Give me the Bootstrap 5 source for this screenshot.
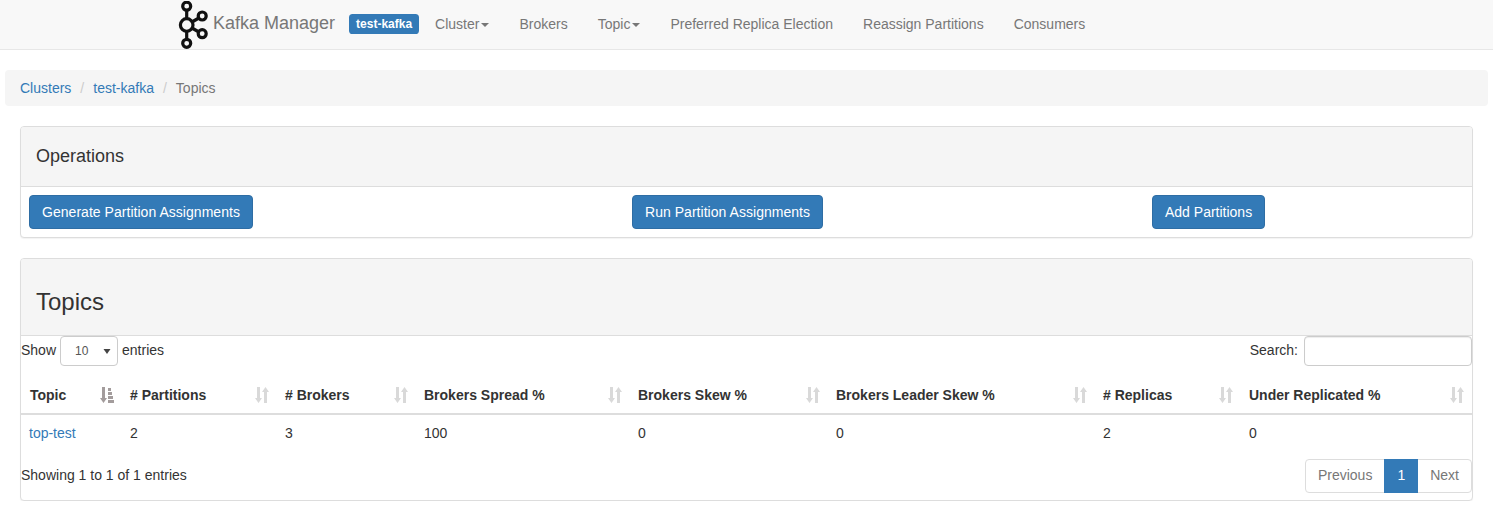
<!DOCTYPE html>
<html lang="en">
<head>
<meta charset="utf-8">
<title>Topics</title>
<link href="https://cdn.jsdelivr.net/npm/bootstrap@5.3.0/dist/css/bootstrap.min.css" rel="stylesheet">
<style>
body{font-family:"Liberation Sans",Arial,sans-serif;font-size:14px;line-height:20px;color:#333;background:#fff}
a{color:#337ab7;text-decoration:none}
.km-nav{height:50px;background:#f8f8f8;border-bottom:1px solid #e7e7e7;padding-left:178px;padding-bottom:2px}
.km-logo{width:30px;height:48px;display:block;margin-top:2px}
.km-brand{font-size:18px;color:#777;margin-left:5px;margin-right:14px;position:relative;top:-1px;white-space:nowrap}
.km-tag{background:#337ab7;color:#fff;font-weight:700;font-size:12px;line-height:12px;padding:4px 7px;border-radius:3.6px;height:20px;white-space:nowrap}
.km-link{color:#777;padding:0 15px;white-space:nowrap}
.km-link.km-first{padding-left:16px}
.km-caret{display:inline-block;border-top:4px solid #777;border-left:4px solid transparent;border-right:4px solid transparent;margin-left:2px;vertical-align:middle}
.km-crumb{margin:20px 5px 0;height:36px;background:#f5f5f5;border-radius:4px;padding:8px 15px;display:flex}
.km-crumb .breadcrumb{margin:0;--bs-breadcrumb-divider-color:#ccc;--bs-breadcrumb-item-active-color:#777;--bs-breadcrumb-item-padding-x:9px}
.km-crumb .breadcrumb-item+.breadcrumb-item::before{content:"/";color:#ccc}
.km-panel{margin:20px 20px 0;border:1px solid #ddd;border-radius:4px;box-shadow:0 1px 1px rgba(0,0,0,.05);background:#fff}
.km-head{background:#f5f5f5;border-bottom:1px solid #ddd;border-radius:3px 3px 0 0;padding:0 15px}
.km-head h3{font-size:18px;line-height:20px;font-weight:500;color:#333;margin:0;padding:19px 0 20px}
.km-head h2{font-size:24px;line-height:26px;font-weight:500;color:#333;margin:0;padding:30px 0 20px}
.km-ops{display:grid;grid-template-columns:603px 520px auto;padding:8px}
.km-ops>div{justify-self:start}
.km-btn{background:#337ab7;border:1px solid #2e6da4;color:#fff;font-size:14px;line-height:20px;padding:6px 12px;border-radius:4px}
.km-btn-long{letter-spacing:.035px}
.km-ctrl{height:30px}
.km-ctrl label{line-height:28px}
.km-select{width:58px;height:30px;border:1px solid #ccc;border-radius:4px;font-size:12px;line-height:18px;color:#555;padding:0 0 0 14px;margin:0 4px;appearance:none;background:#fff url("data:image/svg+xml,%3Csvg xmlns='http://www.w3.org/2000/svg' width='8' height='6'%3E%3Cpath d='M.5 1h7L4 6z' fill='%23444'/%3E%3C/svg%3E") no-repeat right 6px center}
.km-input{width:168px;height:30px;border:1px solid #ccc;border-radius:4px;margin-left:6px;box-shadow:inset 0 1px 1px rgba(0,0,0,.075)}
.km-table{width:1451px;table-layout:fixed;margin:11px 0 0;border-collapse:collapse}
.km-table th{font-weight:700;height:37px;padding:0 8px 1px;border-bottom:2px solid #ddd;vertical-align:middle;white-space:nowrap}
.km-table th:first-child{padding-left:9px}
.km-table td{height:36px;padding:0 8px;vertical-align:middle}
.km-th{display:flex;justify-content:space-between;align-items:center}
.km-sort{width:14px;height:16px;display:block}
.w1{width:101px}.w2{width:155px}.w3{width:139px}.w4{width:214px}.w5{width:198px}.w6{width:267px}.w7{width:146px}.w8{width:231px}
.km-foot{padding:9px 0 7px;align-items:flex-start}
.km-info{padding-top:6px}
.km-pager{margin:0;--bs-pagination-border-color:#ddd}
.km-pager .page-link{font-size:14px;line-height:20px;padding:5px 12px 7px;color:#777;border-color:#ddd;background:#fff}
.km-pager .page-item:first-child .page-link{border-radius:4px 0 0 4px}
.km-pager .page-item:last-child .page-link{border-radius:0 4px 4px 0}
.km-pager .page-item.active .page-link{background:#337ab7;border-color:#337ab7;color:#fff;font-weight:400}
</style>
</head>
<body>
<svg width="0" height="0" class="position-absolute">
  <defs>
    <path id="km-both" d="M2 0h3v11h2L3.500 16 0 11h2z M9 16V5H7L10.500 0 14 5h-2v11z"/>
    <path id="km-bars" d="M2 0h3v11h2L3.500 16 0 11h2z M8 1h3v3H8z M8 5h4v3H8z M8 9h5v3H8z M8 13h6v3H8z"/>
  </defs>
</svg>
<nav class="km-nav d-flex align-items-center">
  <svg class="km-logo" viewBox="0 0 30 48" aria-label="Kafka logo">
    <g fill="none" stroke="#111" stroke-width="3.200">
      <path d="M8.700 9V18M8.700 30V38M14 21L20 17.500M14 27L20 30.500"/>
      <circle cx="8.700" cy="5.200" r="4"/>
      <circle cx="8.700" cy="24" r="6.300"/>
      <circle cx="8.700" cy="42.300" r="4"/>
      <circle cx="24.200" cy="15" r="4"/>
      <circle cx="24.200" cy="32.700" r="4"/>
    </g>
  </svg>
  <span class="km-brand">Kafka Manager</span>
  <span class="km-tag">test-kafka</span>
  <a class="km-link km-first" href="#">Cluster<span class="km-caret"></span></a>
  <a class="km-link" href="#">Brokers</a>
  <a class="km-link" href="#">Topic<span class="km-caret"></span></a>
  <a class="km-link" href="#">Preferred Replica Election</a>
  <a class="km-link" href="#">Reassign Partitions</a>
  <a class="km-link" href="#">Consumers</a>
</nav>

<div class="km-crumb">
  <ol class="breadcrumb">
    <li class="breadcrumb-item"><a href="#">Clusters</a></li>
    <li class="breadcrumb-item"><a href="#">test-kafka</a></li>
    <li class="breadcrumb-item active">Topics</li>
  </ol>
</div>

<section class="km-panel">
  <div class="km-head"><h3>Operations</h3></div>
  <div class="km-ops">
    <div><a class="btn km-btn km-btn-long" href="#">Generate Partition Assignments</a></div>
    <div><a class="btn km-btn km-btn-long" href="#">Run Partition Assignments</a></div>
    <div><a class="btn km-btn" href="#">Add Partitions</a></div>
  </div>
</section>

<section class="km-panel">
  <div class="km-head"><h2>Topics</h2></div>
  <div class="d-flex justify-content-between km-ctrl">
    <label class="d-flex align-items-start">Show <select class="km-select"><option>10</option></select> entries</label>
    <label class="d-flex align-items-start">Search: <input class="km-input" type="search"></label>
  </div>
  <table class="km-table">
    <colgroup><col class="w1"><col class="w2"><col class="w3"><col class="w4"><col class="w5"><col class="w6"><col class="w7"><col class="w8"></colgroup>
    <thead>
      <tr>
        <th><div class="km-th">Topic <svg class="km-sort" viewBox="0 0 14 16" fill="#a39c9c"><use href="#km-bars"/></svg></div></th>
        <th><div class="km-th"># Partitions <svg class="km-sort" viewBox="0 0 14 16" fill="#d9d9d9"><use href="#km-both"/></svg></div></th>
        <th><div class="km-th"># Brokers <svg class="km-sort" viewBox="0 0 14 16" fill="#d9d9d9"><use href="#km-both"/></svg></div></th>
        <th><div class="km-th">Brokers Spread % <svg class="km-sort" viewBox="0 0 14 16" fill="#d9d9d9"><use href="#km-both"/></svg></div></th>
        <th><div class="km-th">Brokers Skew % <svg class="km-sort" viewBox="0 0 14 16" fill="#d9d9d9"><use href="#km-both"/></svg></div></th>
        <th><div class="km-th">Brokers Leader Skew % <svg class="km-sort" viewBox="0 0 14 16" fill="#d9d9d9"><use href="#km-both"/></svg></div></th>
        <th><div class="km-th"># Replicas <svg class="km-sort" viewBox="0 0 14 16" fill="#d9d9d9"><use href="#km-both"/></svg></div></th>
        <th><div class="km-th">Under Replicated % <svg class="km-sort" viewBox="0 0 14 16" fill="#d9d9d9"><use href="#km-both"/></svg></div></th>
      </tr>
    </thead>
    <tbody>
      <tr><td><a href="#">top-test</a></td><td>2</td><td>3</td><td>100</td><td>0</td><td>0</td><td>2</td><td>0</td></tr>
    </tbody>
  </table>
  <div class="d-flex justify-content-between km-foot">
    <div class="km-info">Showing 1 to 1 of 1 entries</div>
    <ul class="pagination km-pager">
      <li class="page-item"><a class="page-link" href="#">Previous</a></li>
      <li class="page-item active"><a class="page-link" href="#">1</a></li>
      <li class="page-item"><a class="page-link" href="#">Next</a></li>
    </ul>
  </div>
</section>
</body>
</html>
